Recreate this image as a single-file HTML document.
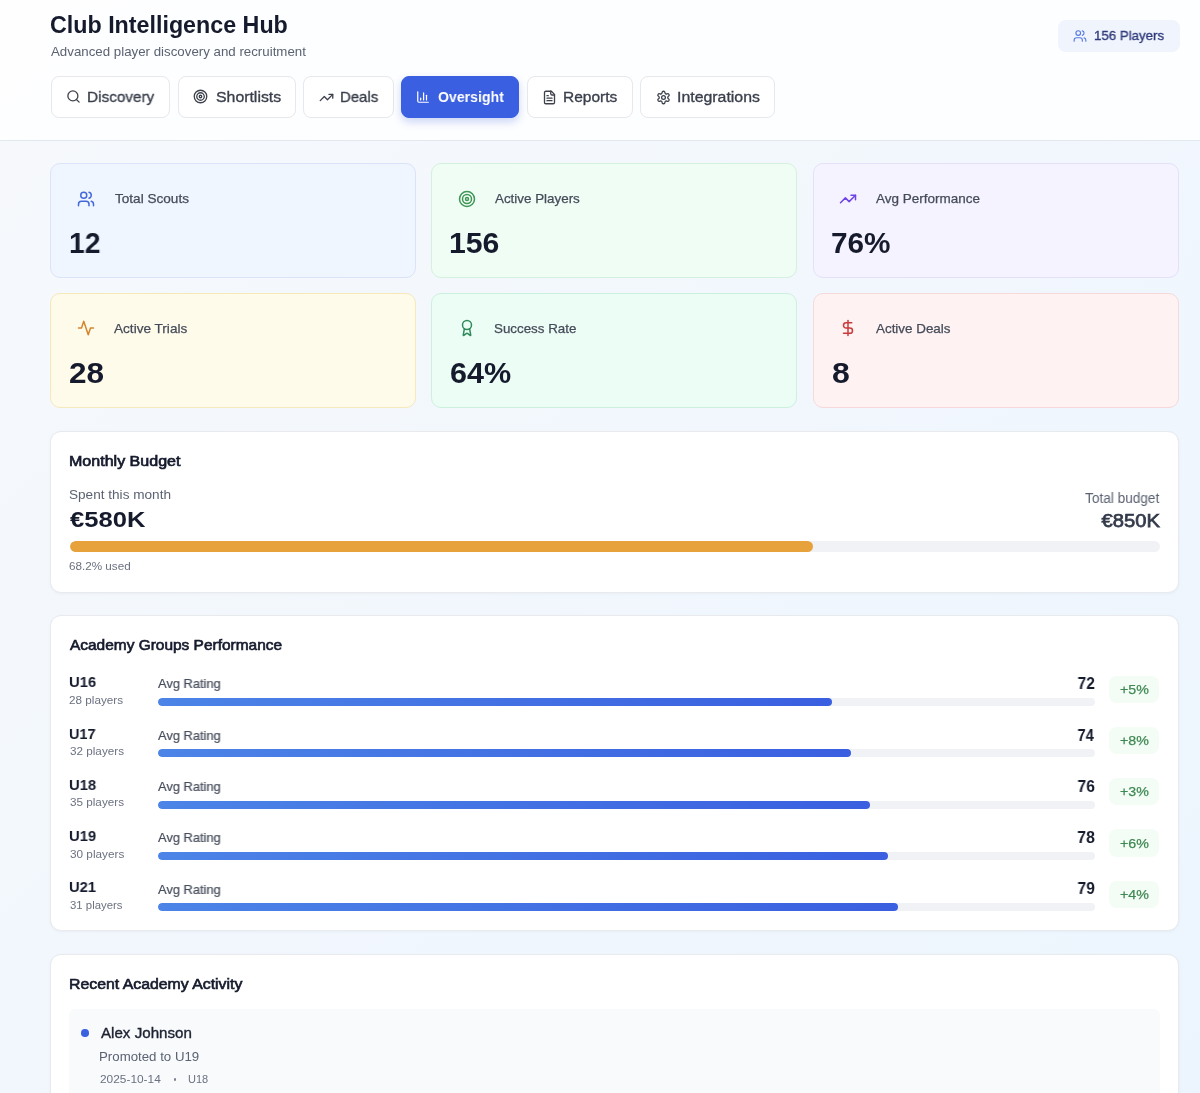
<!DOCTYPE html><html><head><meta charset="utf-8"><style>
*{box-sizing:border-box;margin:0;padding:0}
html,body{width:1200px;height:1093px;overflow:hidden}
body{position:relative;-webkit-font-smoothing:antialiased;background:linear-gradient(to bottom right,#f7f9fc,#ecf5fe);font-family:"Liberation Sans",sans-serif}
.t{position:absolute;white-space:nowrap;will-change:transform}
.ic{position:absolute;display:block}
.hdr{position:absolute;left:0;top:0;width:1200px;height:141px;background:rgba(255,255,255,.8);border-bottom:1px solid #e3e7ee}
.badge{position:absolute;left:1058px;top:20px;width:121.5px;height:32px;border-radius:8px;background:#f0f4fd}
.nav{position:absolute;top:76px;height:42px;border-radius:8px;background:#fff;border:1px solid #e7e8ec}
.nav.act{background:#3a5fe0;border-color:#3a5fe0;box-shadow:0 4px 8px rgba(58,95,224,.25)}
.card{position:absolute;width:366px;height:114.5px;border-radius:10px;border:1px solid}
.panel{position:absolute;left:50px;width:1128.5px;border-radius:11px;background:#fff;border:1px solid #e8eaee;box-shadow:0 1px 3px rgba(15,23,42,.04)}
.track{position:absolute;border-radius:6px;background:#f1f2f5;overflow:hidden}
.fill{height:100%;border-radius:6px}
.delta{position:absolute;left:1108.8px;width:50.2px;height:27.2px;border-radius:8px;background:#f3fcf5}
.item{position:absolute;left:69px;top:1009px;width:1091px;height:120px;border-radius:6px;background:#f8fafc}
.dot{position:absolute;left:81.3px;top:1029.2px;width:7.6px;height:7.6px;border-radius:50%;background:#3b63e0}
.mdot{position:absolute;left:173.8px;top:1078.3px;width:2.4px;height:2.4px;border-radius:50%;background:#7b8190}
</style></head><body>
<div class="hdr"></div>
<div class="badge"></div>
<svg class="ic" style="left:1072.5px;top:28.5px;width:14px;height:14px" viewBox="0 0 24 24" fill="none" stroke="#5a7be0" stroke-width="2" stroke-linecap="round" stroke-linejoin="round"><path d="M16 21v-2a4 4 0 0 0-4-4H6a4 4 0 0 0-4 4v2"/><circle cx="9" cy="7" r="4"/><path d="M22 21v-2a4 4 0 0 0-3-3.87"/><path d="M16 3.13a4 4 0 0 1 0 7.75"/></svg>
<div class="nav" style="left:50.5px;width:119.9px"></div>
<svg class="ic" style="left:65.6px;top:89.4px;width:15px;height:15px" viewBox="0 0 24 24" fill="none" stroke="#3d414c" stroke-width="2.1" stroke-linecap="round" stroke-linejoin="round"><circle cx="11" cy="11" r="8"/><path d="m21 21-4.3-4.3"/></svg>
<div class="nav" style="left:177.5px;width:118.5px"></div>
<svg class="ic" style="left:193.0px;top:89.2px;width:15px;height:15px" viewBox="0 0 24 24" fill="none" stroke="#3d414c" stroke-width="2.1" stroke-linecap="round" stroke-linejoin="round"><circle cx="12" cy="12" r="10"/><circle cx="12" cy="12" r="6"/><circle cx="12" cy="12" r="2"/></svg>
<div class="nav" style="left:302.9px;width:91.0px"></div>
<svg class="ic" style="left:318.8px;top:89.5px;width:15px;height:15px" viewBox="0 0 24 24" fill="none" stroke="#3d414c" stroke-width="2.1" stroke-linecap="round" stroke-linejoin="round"><polyline points="22 7 13.5 15.5 8.5 10.5 2 17"/><polyline points="16 7 22 7 22 13"/></svg>
<div class="nav act" style="left:401.25px;width:117.35000000000002px"></div>
<svg class="ic" style="left:416.3px;top:89.8px;width:14px;height:14px" viewBox="0 0 24 24" fill="none" stroke="#ffffff" stroke-width="2.1" stroke-linecap="round" stroke-linejoin="round"><path d="M3 3v16a2 2 0 0 0 2 2h16"/><path d="M18 17V9"/><path d="M13 17V5"/><path d="M8 17v-3"/></svg>
<div class="nav" style="left:526.75px;width:106.04999999999995px"></div>
<svg class="ic" style="left:542.2px;top:89.5px;width:15px;height:15px" viewBox="0 0 24 24" fill="none" stroke="#3d414c" stroke-width="2.1" stroke-linecap="round" stroke-linejoin="round"><path d="M15 2H6a2 2 0 0 0-2 2v16a2 2 0 0 0 2 2h12a2 2 0 0 0 2-2V7Z"/><path d="M14 2v4a2 2 0 0 0 2 2h4"/><path d="M10 9H8"/><path d="M16 13H8"/><path d="M16 17H8"/></svg>
<div class="nav" style="left:639.9px;width:135.10000000000002px"></div>
<svg class="ic" style="left:655.6px;top:89.6px;width:15px;height:15px" viewBox="0 0 24 24" fill="none" stroke="#3d414c" stroke-width="2.1" stroke-linecap="round" stroke-linejoin="round"><path d="M12.22 2h-.44a2 2 0 0 0-2 2v.18a2 2 0 0 1-1 1.73l-.43.25a2 2 0 0 1-2 0l-.15-.08a2 2 0 0 0-2.73.73l-.22.38a2 2 0 0 0 .73 2.73l.15.1a2 2 0 0 1 1 1.72v.51a2 2 0 0 1-1 1.74l-.15.09a2 2 0 0 0-.73 2.73l.22.38a2 2 0 0 0 2.73.73l.15-.08a2 2 0 0 1 2 0l.43.25a2 2 0 0 1 1 1.73V20a2 2 0 0 0 2 2h.44a2 2 0 0 0 2-2v-.18a2 2 0 0 1 1-1.73l.43-.25a2 2 0 0 1 2 0l.15.08a2 2 0 0 0 2.73-.73l.22-.39a2 2 0 0 0-.73-2.73l-.15-.08a2 2 0 0 1-1-1.74v-.5a2 2 0 0 1 1-1.74l.15-.09a2 2 0 0 0 .73-2.73l-.22-.38a2 2 0 0 0-2.73-.73l-.15.08a2 2 0 0 1-2 0l-.43-.25a2 2 0 0 1-1-1.73V4a2 2 0 0 0-2-2z"/><circle cx="12" cy="12" r="3"/></svg>
<div class="card" style="left:50px;top:163.2px;background:#eff6ff;border-color:#dbe3f8"></div>
<svg class="ic" style="left:76.8px;top:189.5px;width:18px;height:18px" viewBox="0 0 24 24" fill="none" stroke="#4468dc" stroke-width="2" stroke-linecap="round" stroke-linejoin="round"><path d="M16 21v-2a4 4 0 0 0-4-4H6a4 4 0 0 0-4 4v2"/><circle cx="9" cy="7" r="4"/><path d="M22 21v-2a4 4 0 0 0-3-3.87"/><path d="M16 3.13a4 4 0 0 1 0 7.75"/></svg>
<div class="card" style="left:431.2px;top:163.2px;background:#f0fdf4;border-color:#d3f1dc"></div>
<svg class="ic" style="left:458.0px;top:189.5px;width:18px;height:18px" viewBox="0 0 24 24" fill="none" stroke="#3f9656" stroke-width="2" stroke-linecap="round" stroke-linejoin="round"><circle cx="12" cy="12" r="10"/><circle cx="12" cy="12" r="6"/><circle cx="12" cy="12" r="2"/></svg>
<div class="card" style="left:812.5px;top:163.2px;background:#f5f3ff;border-color:#e4e0f8"></div>
<svg class="ic" style="left:839.3px;top:189.5px;width:18px;height:18px" viewBox="0 0 24 24" fill="none" stroke="#6f44e6" stroke-width="2" stroke-linecap="round" stroke-linejoin="round"><polyline points="22 7 13.5 15.5 8.5 10.5 2 17"/><polyline points="16 7 22 7 22 13"/></svg>
<div class="card" style="left:50px;top:293.0px;background:#fffbeb;border-color:#f5e8bb"></div>
<svg class="ic" style="left:76.8px;top:319.3px;width:18px;height:18px" viewBox="0 0 24 24" fill="none" stroke="#d4852f" stroke-width="2" stroke-linecap="round" stroke-linejoin="round"><path d="M22 12h-4l-3 9L9 3l-3 9H2"/></svg>
<div class="card" style="left:431.2px;top:293.0px;background:#ecfdf5;border-color:#ccf0de"></div>
<svg class="ic" style="left:458.0px;top:319.3px;width:18px;height:18px" viewBox="0 0 24 24" fill="none" stroke="#2f8a5a" stroke-width="2" stroke-linecap="round" stroke-linejoin="round"><path d="m15.477 12.89 1.515 8.526a.5.5 0 0 1-.81.47l-3.58-2.687a1 1 0 0 0-1.197 0l-3.586 2.686a.5.5 0 0 1-.81-.469l1.514-8.526"/><circle cx="12" cy="8" r="6"/></svg>
<div class="card" style="left:812.5px;top:293.0px;background:#fef2f2;border-color:#f7d9d9"></div>
<svg class="ic" style="left:839.3px;top:319.3px;width:18px;height:18px" viewBox="0 0 24 24" fill="none" stroke="#c93a3a" stroke-width="2" stroke-linecap="round" stroke-linejoin="round"><line x1="12" x2="12" y1="2" y2="22"/><path d="M17 5H9.5a3.5 3.5 0 0 0 0 7h5a3.5 3.5 0 0 1 0 7H6"/></svg>
<div class="panel" style="top:430.5px;height:162.5px"></div>
<div class="track" style="top:541px;height:10.5px;left:70px;width:1090px"><div class="fill" style="width:743px;background:#e8a23b"></div></div>
<div class="panel" style="top:615px;height:316px"></div>
<div class="track" style="top:698.0px;height:8px;left:157.5px;width:937px"><div class="fill" style="width:674.6px;background:linear-gradient(90deg,#4c84e7,#3a5fe0)"></div></div>
<div class="delta" style="top:675.5px"></div>
<div class="track" style="top:749.3px;height:8px;left:157.5px;width:937px"><div class="fill" style="width:693.4px;background:linear-gradient(90deg,#4c84e7,#3a5fe0)"></div></div>
<div class="delta" style="top:726.8px"></div>
<div class="track" style="top:800.6px;height:8px;left:157.5px;width:937px"><div class="fill" style="width:712.1px;background:linear-gradient(90deg,#4c84e7,#3a5fe0)"></div></div>
<div class="delta" style="top:778.1px"></div>
<div class="track" style="top:851.9px;height:8px;left:157.5px;width:937px"><div class="fill" style="width:730.9px;background:linear-gradient(90deg,#4c84e7,#3a5fe0)"></div></div>
<div class="delta" style="top:829.4px"></div>
<div class="track" style="top:903.2px;height:8px;left:157.5px;width:937px"><div class="fill" style="width:740.2px;background:linear-gradient(90deg,#4c84e7,#3a5fe0)"></div></div>
<div class="delta" style="top:880.7px"></div>
<div class="panel" style="top:954px;height:200px"></div>
<div class="item"></div>
<div class="dot"></div>
<div class="mdot"></div>
<div class="t" id="title" style="left:50.27px;transform-origin:0 0;transform:scaleX(1.0115);top:9px;height:33px;line-height:33px;font-size:23.0px;color:#151a2c;font-weight:bold;">Club Intelligence Hub</div>
<div class="t" id="subtitle" style="left:51.00px;transform-origin:0 0;transform:scaleX(1.0850);top:43px;height:18px;line-height:18px;font-size:12.25px;color:#5b6271;">Advanced player discovery and recruitment</div>
<div class="t" id="badge" style="left:1094.24px;transform-origin:0 0;transform:scaleX(0.9833);top:26px;height:19px;line-height:19px;font-size:13.5px;color:#2e3a7a;-webkit-text-stroke:0.35px #2e3a7a;">156 Players</div>
<div class="t" id="nav0" style="left:87.47px;transform-origin:0 0;transform:scaleX(0.9880);top:86px;height:22px;line-height:22px;font-size:15.5px;color:#3a3f4b;-webkit-text-stroke:0.35px #3a3f4b;">Discovery</div>
<div class="t" id="nav1" style="left:215.51px;transform-origin:0 0;transform:scaleX(1.0223);top:86px;height:22px;line-height:22px;font-size:15.5px;color:#3a3f4b;-webkit-text-stroke:0.35px #3a3f4b;">Shortlists</div>
<div class="t" id="nav2" style="left:340.41px;transform-origin:0 0;transform:scaleX(0.9625);top:86px;height:22px;line-height:22px;font-size:15.5px;color:#3a3f4b;-webkit-text-stroke:0.35px #3a3f4b;">Deals</div>
<div class="t" id="nav3" style="left:438.44px;transform-origin:0 0;transform:scaleX(0.9097);top:86px;height:22px;line-height:22px;font-size:15.5px;color:#ffffff;font-weight:bold;">Oversight</div>
<div class="t" id="nav4" style="left:563.36px;transform-origin:0 0;transform:scaleX(0.9964);top:86px;height:22px;line-height:22px;font-size:15.5px;color:#3a3f4b;-webkit-text-stroke:0.35px #3a3f4b;">Reports</div>
<div class="t" id="nav5" style="left:676.87px;transform-origin:0 0;transform:scaleX(1.0234);top:86px;height:22px;line-height:22px;font-size:15.5px;color:#3a3f4b;-webkit-text-stroke:0.35px #3a3f4b;">Integrations</div>
<div class="t" id="clab0" style="left:114.53px;transform-origin:0 0;transform:scaleX(1.0447);top:189px;height:19px;line-height:19px;font-size:13.0px;color:#454b59;-webkit-text-stroke:0.25px #454b59;">Total Scouts</div>
<div class="t" id="cval0" style="left:68.61px;transform-origin:0 0;transform:scaleX(0.9736);top:223px;height:41px;line-height:41px;font-size:29.0px;color:#151a2c;font-weight:bold;">12</div>
<div class="t" id="clab1" style="left:495.00px;transform-origin:0 0;transform:scaleX(1.0293);top:189px;height:19px;line-height:19px;font-size:13.0px;color:#454b59;-webkit-text-stroke:0.25px #454b59;">Active Players</div>
<div class="t" id="cval1" style="left:449.49px;transform-origin:0 0;transform:scaleX(1.0411);top:223px;height:41px;line-height:41px;font-size:29.0px;color:#151a2c;font-weight:bold;">156</div>
<div class="t" id="clab2" style="left:876.00px;transform-origin:0 0;transform:scaleX(1.0374);top:189px;height:19px;line-height:19px;font-size:13.0px;color:#454b59;-webkit-text-stroke:0.25px #454b59;">Avg Performance</div>
<div class="t" id="cval2" style="left:831.11px;transform-origin:0 0;transform:scaleX(1.0255);top:223px;height:41px;line-height:41px;font-size:29.0px;color:#151a2c;font-weight:bold;">76%</div>
<div class="t" id="clab3" style="left:114.00px;transform-origin:0 0;transform:scaleX(1.0453);top:319px;height:19px;line-height:19px;font-size:13.0px;color:#454b59;-webkit-text-stroke:0.25px #454b59;">Active Trials</div>
<div class="t" id="cval3" style="left:69.35px;transform-origin:0 0;transform:scaleX(1.0865);top:353px;height:41px;line-height:41px;font-size:29.0px;color:#151a2c;font-weight:bold;">28</div>
<div class="t" id="clab4" style="left:494.33px;transform-origin:0 0;transform:scaleX(1.0265);top:319px;height:19px;line-height:19px;font-size:13.0px;color:#454b59;-webkit-text-stroke:0.25px #454b59;">Success Rate</div>
<div class="t" id="cval4" style="left:450.48px;transform-origin:0 0;transform:scaleX(1.0541);top:353px;height:41px;line-height:41px;font-size:29.0px;color:#151a2c;font-weight:bold;">64%</div>
<div class="t" id="clab5" style="left:876.00px;transform-origin:0 0;transform:scaleX(1.0312);top:319px;height:19px;line-height:19px;font-size:13.0px;color:#454b59;-webkit-text-stroke:0.25px #454b59;">Active Deals</div>
<div class="t" id="cval5" style="left:831.74px;transform-origin:0 0;transform:scaleX(1.1034);top:353px;height:41px;line-height:41px;font-size:29.0px;color:#151a2c;font-weight:bold;">8</div>
<div class="t" id="bt" style="left:68.72px;transform-origin:0 0;transform:scaleX(1.1454);top:451px;height:20px;line-height:20px;font-size:14.0px;color:#151a2c;-webkit-text-stroke:0.65px #151a2c;">Monthly Budget</div>
<div class="t" id="bspent" style="left:69.32px;transform-origin:0 0;transform:scaleX(1.0656);top:486px;height:18px;line-height:18px;font-size:12.75px;color:#5b6271;">Spent this month</div>
<div class="t" id="bval" style="left:69.74px;transform-origin:0 0;transform:scaleX(1.1498);top:504px;height:32px;line-height:32px;font-size:22.25px;color:#151a2c;font-weight:bold;">€580K</div>
<div class="t" id="btot" style="right:40.49px;transform-origin:100% 0;transform:scaleX(0.9726);top:488px;height:20px;line-height:20px;font-size:14.0px;color:#5b6271;">Total budget</div>
<div class="t" id="bval2" style="right:40.17px;transform-origin:100% 0;transform:scaleX(1.0618);top:507px;height:27px;line-height:27px;font-size:19.0px;color:#333a4a;-webkit-text-stroke:0.75px #333a4a;">€850K</div>
<div class="t" id="bused" style="left:69.42px;transform-origin:0 0;transform:scaleX(1.0868);top:558px;height:16px;line-height:16px;font-size:10.75px;color:#6b7180;">68.2% used</div>
<div class="t" id="at" style="left:70.00px;transform-origin:0 0;transform:scaleX(1.0297);top:634px;height:21px;line-height:21px;font-size:15.0px;color:#151a2c;-webkit-text-stroke:0.65px #151a2c;">Academy Groups Performance</div>
<div class="t" id="g0" style="left:69.31px;transform-origin:0 0;transform:scaleX(0.9723);top:671px;height:22px;line-height:22px;font-size:15.25px;color:#151a2c;font-weight:bold;">U16</div>
<div class="t" id="gp0" style="left:69.41px;transform-origin:0 0;transform:scaleX(1.0423);top:692px;height:16px;line-height:16px;font-size:11.25px;color:#6b7180;">28 players</div>
<div class="t" id="ga0" style="left:158.20px;transform-origin:0 0;transform:scaleX(0.9883);top:674px;height:19px;line-height:19px;font-size:13.0px;color:#474d5c;-webkit-text-stroke:0.2px #474d5c;">Avg Rating</div>
<div class="t" id="gv0" style="right:105.50px;transform-origin:100% 0;transform:scaleX(0.9675);top:672px;height:23px;line-height:23px;font-size:16.0px;color:#151a2c;font-weight:bold;">72</div>
<div class="t" id="gd0" style="left:1120.09px;transform-origin:0 0;transform:scaleX(1.0538);top:680px;height:19px;line-height:19px;font-size:13.5px;color:#3f8853;-webkit-text-stroke:0.25px #3f8853;">+5%</div>
<div class="t" id="g1" style="left:69.33px;transform-origin:0 0;transform:scaleX(0.9476);top:723px;height:22px;line-height:22px;font-size:15.25px;color:#151a2c;font-weight:bold;">U17</div>
<div class="t" id="gp1" style="left:69.53px;transform-origin:0 0;transform:scaleX(1.0400);top:743px;height:16px;line-height:16px;font-size:11.25px;color:#6b7180;">32 players</div>
<div class="t" id="ga1" style="left:158.20px;transform-origin:0 0;transform:scaleX(0.9883);top:726px;height:19px;line-height:19px;font-size:13.0px;color:#474d5c;-webkit-text-stroke:0.2px #474d5c;">Avg Rating</div>
<div class="t" id="gv1" style="right:105.97px;transform-origin:100% 0;transform:scaleX(0.9171);top:724px;height:23px;line-height:23px;font-size:16.0px;color:#151a2c;font-weight:bold;">74</div>
<div class="t" id="gd1" style="left:1120.09px;transform-origin:0 0;transform:scaleX(1.0538);top:731px;height:19px;line-height:19px;font-size:13.5px;color:#3f8853;-webkit-text-stroke:0.25px #3f8853;">+8%</div>
<div class="t" id="g2" style="left:69.31px;transform-origin:0 0;transform:scaleX(0.9705);top:774px;height:22px;line-height:22px;font-size:15.25px;color:#151a2c;font-weight:bold;">U18</div>
<div class="t" id="gp2" style="left:69.53px;transform-origin:0 0;transform:scaleX(1.0400);top:794px;height:16px;line-height:16px;font-size:11.25px;color:#6b7180;">35 players</div>
<div class="t" id="ga2" style="left:158.20px;transform-origin:0 0;transform:scaleX(0.9883);top:777px;height:19px;line-height:19px;font-size:13.0px;color:#474d5c;-webkit-text-stroke:0.2px #474d5c;">Avg Rating</div>
<div class="t" id="gv2" style="right:105.50px;transform-origin:100% 0;transform:scaleX(0.9736);top:775px;height:23px;line-height:23px;font-size:16.0px;color:#151a2c;font-weight:bold;">76</div>
<div class="t" id="gd2" style="left:1120.09px;transform-origin:0 0;transform:scaleX(1.0538);top:782px;height:19px;line-height:19px;font-size:13.5px;color:#3f8853;-webkit-text-stroke:0.25px #3f8853;">+3%</div>
<div class="t" id="g3" style="left:69.31px;transform-origin:0 0;transform:scaleX(0.9723);top:825px;height:22px;line-height:22px;font-size:15.25px;color:#151a2c;font-weight:bold;">U19</div>
<div class="t" id="gp3" style="left:69.53px;transform-origin:0 0;transform:scaleX(1.0459);top:846px;height:16px;line-height:16px;font-size:11.25px;color:#6b7180;">30 players</div>
<div class="t" id="ga3" style="left:158.20px;transform-origin:0 0;transform:scaleX(0.9883);top:828px;height:19px;line-height:19px;font-size:13.0px;color:#474d5c;-webkit-text-stroke:0.2px #474d5c;">Avg Rating</div>
<div class="t" id="gv3" style="right:105.65px;transform-origin:100% 0;transform:scaleX(0.9881);top:826px;height:23px;line-height:23px;font-size:16.0px;color:#151a2c;font-weight:bold;">78</div>
<div class="t" id="gd3" style="left:1120.09px;transform-origin:0 0;transform:scaleX(1.0538);top:834px;height:19px;line-height:19px;font-size:13.5px;color:#3f8853;-webkit-text-stroke:0.25px #3f8853;">+6%</div>
<div class="t" id="g4" style="left:69.32px;transform-origin:0 0;transform:scaleX(0.9667);top:876px;height:22px;line-height:22px;font-size:15.25px;color:#151a2c;font-weight:bold;">U21</div>
<div class="t" id="gp4" style="left:69.55px;transform-origin:0 0;transform:scaleX(1.0105);top:897px;height:16px;line-height:16px;font-size:11.25px;color:#6b7180;">31 players</div>
<div class="t" id="ga4" style="left:158.20px;transform-origin:0 0;transform:scaleX(0.9883);top:880px;height:19px;line-height:19px;font-size:13.0px;color:#474d5c;-webkit-text-stroke:0.2px #474d5c;">Avg Rating</div>
<div class="t" id="gv4" style="right:105.50px;transform-origin:100% 0;transform:scaleX(0.9736);top:877px;height:23px;line-height:23px;font-size:16.0px;color:#151a2c;font-weight:bold;">79</div>
<div class="t" id="gd4" style="left:1120.09px;transform-origin:0 0;transform:scaleX(1.0538);top:885px;height:19px;line-height:19px;font-size:13.5px;color:#3f8853;-webkit-text-stroke:0.25px #3f8853;">+4%</div>
<div class="t" id="rt" style="left:68.73px;transform-origin:0 0;transform:scaleX(1.0215);top:973px;height:22px;line-height:22px;font-size:15.5px;color:#151a2c;-webkit-text-stroke:0.65px #151a2c;">Recent Academy Activity</div>
<div class="t" id="rn" style="left:100.50px;transform-origin:0 0;transform:scaleX(1.0261);top:1023px;height:21px;line-height:21px;font-size:14.75px;color:#1c2130;-webkit-text-stroke:0.35px #1c2130;">Alex Johnson</div>
<div class="t" id="rp" style="left:99.44px;transform-origin:0 0;transform:scaleX(1.1048);top:1049px;height:17px;line-height:17px;font-size:12.0px;color:#5b6271;">Promoted to U19</div>
<div class="t" id="rd" style="left:99.91px;transform-origin:0 0;transform:scaleX(1.0804);top:1071px;height:16px;line-height:16px;font-size:11.0px;color:#6b7180;">2025-10-14</div>
<div class="t" id="ru" style="left:188.32px;transform-origin:0 0;top:1071px;height:16px;line-height:16px;font-size:11.0px;color:#6b7180;">U18</div>
</body></html>
